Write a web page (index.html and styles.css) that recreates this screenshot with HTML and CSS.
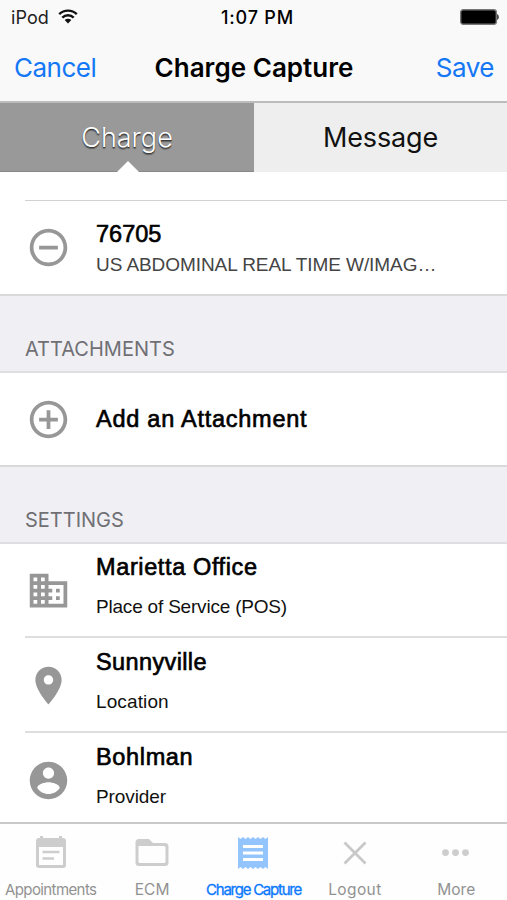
FILE: index.html
```html
<!DOCTYPE html>
<html lang="en">
<head>
<meta charset="utf-8">
<title>Charge Capture</title>
<link rel="stylesheet" href="styles.css">
</head>
<body>
<div class="app">
  <header class="top">
    <div class="status">
      <div class="device"><span>iPod</span>
        <svg class="wifi" viewBox="0 0 20 15" fill="none" stroke="#111" stroke-width="2.4"><path d="M1.2 5.2a12.6 12.6 0 0 1 17.6 0"/><path d="M4.3 8.6a8.2 8.2 0 0 1 11.4 0"/><path d="M10 14.4L6.7 11a4.7 4.7 0 0 1 6.6 0z" fill="#111" stroke="none"/></svg>
      </div>
      <div class="time">1:07 PM</div>
      <svg class="battery" viewBox="0 0 39 16"><rect x=".7" y=".7" width="35.6" height="14.6" rx="2.6" fill="#000" stroke="#777" stroke-width="1.4"/><path d="M37.2 5c2 .8 2 5.2 0 6z" fill="#222"/></svg>
    </div>
    <nav class="nav"><a class="cancel">Cancel</a><h1>Charge Capture</h1><a class="save">Save</a></nav>
  </header>
  <div class="segments"><div class="segment active"><span>Charge</span></div><div class="segment"><span>Message</span></div></div>
  <main class="list">
    <div class="spacer"></div>
    <section class="row code">
      <svg class="icon" viewBox="0 0 24 24"><path d="M7 11v2h10v-2H7zm5-9C6.48 2 2 6.48 2 12s4.480 10 10 10 10-4.480 10-10S17.520 2 12 2zm0 18c-4.410 0-8-3.590-8-8s3.590-8 8-8 8 3.590 8 8-3.590 8-8 8z"/></svg>
      <div class="text"><div class="title t-code">76705</div><div class="desc">US ABDOMINAL REAL TIME W/IMAG…</div></div>
    </section>
    <h2 class="group"><span class="g-att">ATTACHMENTS</span></h2>
    <section class="row add">
      <svg class="icon" viewBox="0 0 24 24"><path d="M13 7h-2v4H7v2h4v4h2v-4h4v-2h-4V7zm-1-5C6.480 2 2 6.480 2 12s4.480 10 10 10 10-4.480 10-10S17.520 2 12 2zm0 18c-4.410 0-8-3.590-8-8s3.590-8 8-8 8 3.590 8 8-3.590 8-8 8z"/></svg>
      <div class="text"><div class="title t-add">Add an Attachment</div></div>
    </section>
    <h2 class="group second"><span class="g-set">SETTINGS</span></h2>
    <section class="row setting">
      <svg class="icon" viewBox="0 0 24 24"><path d="M12 7V3H2v18h20V7H12zM6 19H4v-2h2v2zm0-4H4v-2h2v2zm0-4H4V9h2v2zm0-4H4V5h2v2zm4 12H8v-2h2v2zm0-4H8v-2h2v2zm0-4H8V9h2v2zm0-4H8V5h2v2zm10 12h-8v-2h2v-2h-2v-2h2v-2h-2V9h8v10zm-2-8h-2v2h2v-2zm0 4h-2v2h2v-2z"/></svg>
      <div class="text"><div class="title t-mar">Marietta Office</div><div class="sub s-pos">Place of Service (POS)</div></div>
    </section>
    <section class="row setting">
      <svg class="icon" viewBox="0 0 24 24"><path d="M12 2C8.130 2 5 5.130 5 9c0 5.250 7 13 7 13s7-7.750 7-13c0-3.870-3.130-7-7-7zm0 9.500c-1.380 0-2.500-1.120-2.500-2.500s1.120-2.500 2.500-2.500 2.500 1.120 2.500 2.500-1.120 2.500-2.500 2.500z"/></svg>
      <div class="text"><div class="title t-sun">Sunnyville</div><div class="sub s-loc">Location</div></div>
    </section>
    <section class="row setting">
      <svg class="icon" viewBox="0 0 24 24"><path d="M12 2C6.480 2 2 6.480 2 12s4.480 10 10 10 10-4.480 10-10S17.520 2 12 2zm0 3c1.660 0 3 1.340 3 3s-1.340 3-3 3-3-1.340-3-3 1.340-3 3-3zm0 14.200c-2.500 0-4.710-1.280-6-3.220.030-1.990 4-3.080 6-3.080 1.990 0 5.970 1.090 6 3.080-1.290 1.940-3.500 3.220-6 3.220z"/></svg>
      <div class="text"><div class="title t-boh">Bohlman</div><div class="sub s-pro">Provider</div></div>
    </section>
  </main>
  <footer class="tabs">
    <div class="tab"><svg viewBox="0 0 40 40"><path fill-rule="evenodd" d="M9 4v2H8a3 3 0 0 0-3 3v24a3 3 0 0 0 3 3h24a3 3 0 0 0 3-3V9a3 3 0 0 0-3-3h-1V4h-3v2H12V4zM8 15h24v18H8z"/><path d="M11.500 18.700h17v2.500h-17zM11.500 25.200H23v2.500H11.500z"/></svg><span class="l-app">Appointments</span></div>
    <div class="tab"><svg viewBox="0 0 40 40"><path fill-rule="evenodd" d="M7 7h10l4 4h12a3.500 3.500 0 0 1 3.500 3.500v16A3.500 3.500 0 0 1 33 34H7a3.500 3.500 0 0 1-3.500-3.500v-20A3.500 3.500 0 0 1 7 7zm-.5 7v15.500A1.500 1.500 0 0 0 8 31h24a1.500 1.500 0 0 0 1.500-1.500V15.500A1.500 1.500 0 0 0 32 14z"/></svg><span class="l-ecm">ECM</span></div>
    <div class="tab selected"><svg viewBox="0 0 40 40"><path fill-rule="evenodd" d="M5 5l2.500 2L10 5l2.500 2L15 5l2.500 2L20 5l2.500 2L25 5l2.500 2L30 5l2.500 2L35 5v32l-2.500-2-2.500 2-2.500-2-2.500 2-2.500-2-2.500 2-2.500-2-2.500 2-2.500-2-2.500 2-2.500-2L5 37zM10 13v3h20v-3zm0 6.500v3h20v-3zm0 6.500v3h20v-3z"/></svg><span class="l-cap">Charge Capture</span></div>
    <div class="tab"><svg viewBox="0 0 40 40"><path d="M9.500 10.500l21 21m0-21l-21 21" fill="none" stroke="#c8c8c8" stroke-width="2.700"/></svg><span class="l-log">Logout</span></div>
    <div class="tab"><svg viewBox="0 0 40 40"><circle cx="9.500" cy="20.600" r="3.400"/><circle cx="19.500" cy="20.600" r="3.400"/><circle cx="29.500" cy="20.600" r="3.400"/></svg><span class="l-more">More</span></div>
  </footer>
</div>
</body>
</html>
```
FILE: styles.css
```css
* { box-sizing: border-box; }
body { margin: 0; background: #fff; color: #000; font-family: Inter, "Liberation Sans", sans-serif; }
.app { width: 507px; height: 900px; display: flex; flex-direction: column; overflow: hidden; white-space: nowrap; }
.top { height: 103px; flex: none; background: #f9f9f9; border-bottom: 2px solid #bcbcbc; }
.status { height: 35px; display: grid; grid-template-columns: 1fr auto 1fr; align-items: center; padding: 0 8px 0 11px; font-size: 18px; }
.device { display: flex; align-items: center; gap: 9px; color: #222; letter-spacing: .1px; }
.wifi { width: 20px; height: 15px; margin-top: -2px; }
.time { font-weight: 500; letter-spacing: .8px; padding-left: 5px; }
.battery { width: 39px; height: 16px; justify-self: end; margin-top: -1px; }
.nav { height: 64px; display: grid; grid-template-columns: 1fr auto 1fr; align-items: center; padding: 0 13px 0 14px; font-size: 26px; color: #1478f6; }
.nav h1 { margin: 0; font-size: 26px; font-weight: 600; color: #000; letter-spacing: .04px; }
.cancel { letter-spacing: -.5px; }
.save { justify-self: end; letter-spacing: -.5px; }
.segments { height: 69px; flex: none; display: grid; grid-template-columns: 254px 253px; }
.segment { position: relative; display: flex; align-items: center; justify-content: center; background: #eee; font-size: 27px; color: #111; letter-spacing: -.15px; }
.segment.active { background: #999; color: #fff; font-weight: 300; letter-spacing: 0; padding-top: 1px; text-shadow: 0 1px 1px #333, 0 2px 1px #666; border-bottom: 1px solid #888; }
.segment.active::after { content: ""; position: absolute; left: 117px; bottom: -1px; border: 11px solid transparent; border-top: 0; border-bottom: 11px solid #fff; }
.list { flex: 1; min-height: 0; overflow: hidden; font-family: "Liberation Sans", sans-serif; }
.spacer { height: 29px; margin-left: 25px; border-bottom: 1px solid #d2d2d4; }
.row { position: relative; display: flex; align-items: center; padding-left: 25px; }
.code { height: 93px; }
.add { height: 92px; }
.setting { height: 95px; padding-bottom: 3px; }
.setting .text { margin-top: -9px; }
.setting + .setting::before { content: ""; position: absolute; left: 25px; right: 0; top: -3px; height: 2px; background: #dededf; }
.icon { width: 45px; height: 45px; margin: 0 25px 0 1px; fill: #979797; flex: none; }
.text { display: flex; flex-direction: column; }
.title { font-size: 23.500px; line-height: 30px; -webkit-text-stroke: .65px #000; }
.t-add { letter-spacing: .75px; }
.t-mar { letter-spacing: .62px; }
.t-sun { letter-spacing: .38px; }
.t-boh { letter-spacing: .65px; }
.desc { font-size: 19px; line-height: 24px; margin-top: 4px; color: #444; letter-spacing: -.07px; }
.sub { font-size: 19px; line-height: 24px; margin-top: 13px; color: #111; }
.s-pos { letter-spacing: -.2px; }
.s-loc { letter-spacing: .12px; }
.s-pro { letter-spacing: -.1px; }
.group { margin: 0; height: 79px; display: flex; align-items: flex-end; padding: 0 25px 10px; background: #efeff4; border-top: 2px solid #dadadd; border-bottom: 2px solid #dfdfe2; font: 400 20px/24px Inter, sans-serif; color: #707074; }
.tabs { height: 78px; flex: none; display: grid; grid-template-columns: repeat(5, 1fr); border-top: 2px solid #c9c9c9; background: #fefefe; font-size: 15.500px; color: #929292; }
.tab { display: flex; flex-direction: column; align-items: center; padding-top: 8px; }
.tab svg { width: 40px; height: 40px; fill: #cdcdcd; }
.tab span { line-height: 20px; margin-top: 8px; }
.tab.selected { color: #0a78ff; }
.tab.selected svg { fill: #94c4fc; }
.tab .l-app { letter-spacing: -.6px; font-size: 15px; }
.tab .l-cap { letter-spacing: -1.250px; font-size: 15px; -webkit-text-stroke: .3px #0a78ff; }
.l-log { letter-spacing: .4px; }
```
